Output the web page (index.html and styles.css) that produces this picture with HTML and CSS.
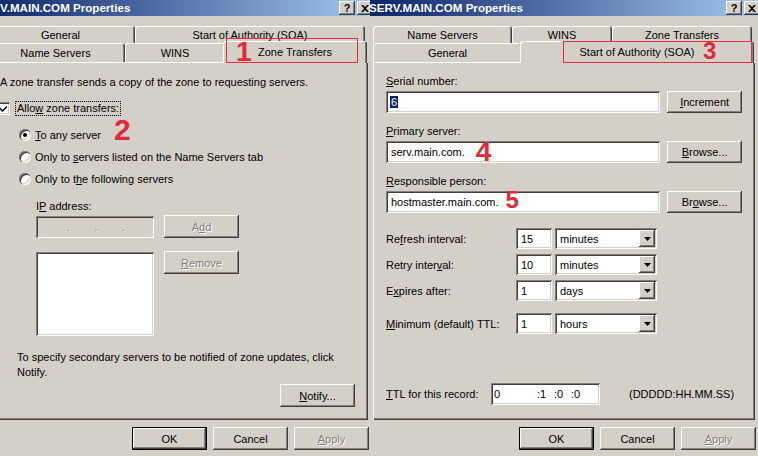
FILE: index.html
```html
<!DOCTYPE html>
<html lang="en">
<head>
    <meta charset="UTF-8">
    <meta name="viewport" content="width=device-width, initial-scale=1.0">
    <title>SERV.MAIN.COM Properties</title>
    <link rel="stylesheet" href="styles.css">
</head>
<body>
<div class="desktop">

    <!-- left dialog: Zone Transfers tab -->
    <div class="window window-left">
        <div class="titlebar">
            <span class="title">V.MAIN.COM Properties</span>
            <span class="caption-btns">
                <span class="cap-btn">?</span>
                <span class="cap-btn"><svg width="8" height="7" viewBox="0 0 8 7"><path d="M0 0h2l2 2 2-2h2L5 3.5 8 7H6L4 5 2 7H0l3-3.5z" fill="#000"/></svg></span>
            </span>
        </div>
        <div class="window-body">
            <div class="tabs">
                <div class="tab-row row-b">
                    <div class="tab">General</div>
                    <div class="tab">Start of Authority (SOA)</div>
                </div>
                <div class="tab-row row-a front">
                    <div class="tab">Name Servers</div>
                    <div class="tab">WINS</div>
                    <div class="tab selected">Zone Transfers
                        <div class="mark mark-1"><span class="num num-1">1</span></div>
                    </div>
                </div>
            </div>

            <div class="panel zt">
                <p class="intro">A zone transfer sends a copy of the zone to requesting servers.</p>
                <div class="check-row">
                    <span class="checkbox"><svg width="9" height="9" viewBox="0 0 9 9"><path d="M1 3.5l2.5 2.5L8 1.5v2L3.5 8 1 5.5z" fill="#000"/></svg></span>
                    <span class="focus">Allo<u>w</u> zone transfers:</span>
                </div>
                <div class="radio-list">
                    <div class="radio-row">
                        <span class="radio on"></span>
                        <span><u>T</u>o any server</span>
                        <span class="num num-2">2</span>
                    </div>
                    <div class="radio-row">
                        <span class="radio"></span>
                        <span>Only to <u>s</u>ervers listed on the Name Servers tab</span>
                    </div>
                    <div class="radio-row">
                        <span class="radio"></span>
                        <span>Only to t<u>h</u>e following servers</span>
                    </div>
                </div>
                <div class="ip-block">
                    <div class="label">I<u>P</u> address:</div>
                    <div class="ip-grid">
                        <div class="textbox ipbox"><span class="dot">.</span><span class="dot">.</span><span class="dot">.</span></div>
                        <div class="btn disabled">A<u>d</u>d</div>
                        <div class="textbox listbox"></div>
                        <div class="btn disabled"><u>R</u>emove</div>
                    </div>
                </div>
                <p class="note">To specify secondary servers to be notified of zone updates, click<br>Notify.</p>
                <div class="notify-row">
                    <div class="btn"><u>N</u>otify...</div>
                </div>
            </div>

            <div class="buttons">
                <div class="btn default">OK</div>
                <div class="btn">Cancel</div>
                <div class="btn disabled"><u>A</u>pply</div>
            </div>
        </div>
    </div>

    <!-- right dialog: SOA tab -->
    <div class="window window-right">
        <div class="titlebar">
            <span class="title">SERV.MAIN.COM Properties</span>
            <span class="caption-btns">
                <span class="cap-btn">?</span>
                <span class="cap-btn"><svg width="8" height="7" viewBox="0 0 8 7"><path d="M0 0h2l2 2 2-2h2L5 3.5 8 7H6L4 5 2 7H0l3-3.5z" fill="#000"/></svg></span>
            </span>
        </div>
        <div class="window-body">
            <div class="tabs">
                <div class="tab-row row-a">
                    <div class="tab">Name Servers</div>
                    <div class="tab">WINS</div>
                    <div class="tab">Zone Transfers</div>
                </div>
                <div class="tab-row row-b front">
                    <div class="tab">General</div>
                    <div class="tab selected">Start of Authority (SOA)
                        <div class="mark mark-3"><span class="num num-3">3</span></div>
                    </div>
                </div>
            </div>

            <div class="panel soa">
                <div class="field">
                    <div class="label"><u>S</u>erial number:</div>
                    <div class="field-row">
                        <div class="textbox wide"><span class="sel">6</span></div>
                        <div class="btn"><u>I</u>ncrement</div>
                    </div>
                </div>
                <div class="field">
                    <div class="label"><u>P</u>rimary server:</div>
                    <div class="field-row">
                        <div class="textbox wide">serv.main.com.<span class="num num-4">4</span></div>
                        <div class="btn"><u>B</u>rowse...</div>
                    </div>
                </div>
                <div class="field">
                    <div class="label"><u>R</u>esponsible person:</div>
                    <div class="field-row">
                        <div class="textbox wide">hostmaster.main.com.<span class="num num-5">5</span></div>
                        <div class="btn">Br<u>o</u>wse...</div>
                    </div>
                </div>

                <div class="intervals">
                    <div class="int-row">
                        <span class="int-label">Re<u>f</u>resh interval:</span>
                        <div class="textbox num-box">15</div>
                        <div class="combo">minutes<span class="combo-btn"><svg width="7" height="4" viewBox="0 0 7 4"><path d="M0 0h7L3.5 4z" fill="#000"/></svg></span></div>
                    </div>
                    <div class="int-row">
                        <span class="int-label">Retry inter<u>v</u>al:</span>
                        <div class="textbox num-box">10</div>
                        <div class="combo">minutes<span class="combo-btn"><svg width="7" height="4" viewBox="0 0 7 4"><path d="M0 0h7L3.5 4z" fill="#000"/></svg></span></div>
                    </div>
                    <div class="int-row">
                        <span class="int-label">E<u>x</u>pires after:</span>
                        <div class="textbox num-box">1</div>
                        <div class="combo">days<span class="combo-btn"><svg width="7" height="4" viewBox="0 0 7 4"><path d="M0 0h7L3.5 4z" fill="#000"/></svg></span></div>
                    </div>
                    <div class="int-row spaced">
                        <span class="int-label"><u>M</u>inimum (default) TTL:</span>
                        <div class="textbox num-box">1</div>
                        <div class="combo">hours<span class="combo-btn"><svg width="7" height="4" viewBox="0 0 7 4"><path d="M0 0h7L3.5 4z" fill="#000"/></svg></span></div>
                    </div>
                </div>

                <div class="ttl-row">
                    <span class="ttl-label"><u>T</u>TL for this record:</span>
                    <div class="textbox ttl-box">
                        <span class="seg seg-days">0</span><span class="seg">:1</span><span class="seg">:0</span><span class="seg">:0</span>
                    </div>
                    <span class="ttl-hint">(DDDDD:HH.MM.SS)</span>
                </div>
            </div>

            <div class="buttons">
                <div class="btn default">OK</div>
                <div class="btn">Cancel</div>
                <div class="btn disabled"><u>A</u>pply</div>
            </div>
        </div>
    </div>

</div>
</body>
</html>
```

FILE: styles.css
```css
* {
    box-sizing: border-box;
}

body {
    margin: 0;
    width: 758px;
    height: 456px;
    overflow: hidden;
    background: #d4d0c8;
    font-family: "Liberation Sans", Arial, sans-serif;
    font-size: 11px;
    color: #000;
}

p {
    margin: 0;
}

.desktop {
    display: flex;
    height: 456px;
}

/* windows */
.window {
    position: relative;
    flex: 0 0 394px;
    width: 394px;
    height: 456px;
    background: #d4d0c8;
}

.window-left {
    margin-left: -17px;
    z-index: 1;
}

.window-right {
    margin-left: -7px;
    z-index: 2;
}

.titlebar {
    display: flex;
    align-items: center;
    justify-content: space-between;
    height: 16px;
    padding: 0 4px 0 17px;
    background: linear-gradient(to right, #0a246a, #a6caf0);
}

.window-right .titlebar {
    padding-left: 0;
}

.window-right .title {
    margin-left: -1px;
}

.title {
    color: #fff;
    font-weight: bold;
    font-size: 11.6px;
    line-height: 16px;
    white-space: nowrap;
}

.caption-btns {
    display: flex;
    gap: 2px;
}

.cap-btn {
    display: flex;
    align-items: center;
    justify-content: center;
    width: 16px;
    height: 14px;
    background: #d4d0c8;
    font-weight: bold;
    font-size: 11px;
    box-shadow: inset -1px -1px #404040, inset 1px 1px #fff, inset -2px -2px #808080;
}

.window-body {
    padding: 0 8px 0 3px;
}

/* tabs */
.tabs {
    margin: 10px 4px 0 0;
}

.tab-row {
    display: grid;
    height: 17px;
}

.tab-row.front {
    height: 19px;
}

.row-a {
    grid-template-columns: 139px 100px 1fr;
}

.row-b {
    grid-template-columns: 149px 1fr;
}

.tab {
    position: relative;
    display: flex;
    align-items: center;
    justify-content: center;
    background: #d4d0c8;
    border-radius: 3px 3px 0 0;
    box-shadow: inset 1px 1px #fff, inset -1px 0 #404040, inset -2px 0 #808080;
    white-space: nowrap;
}

.tab-row.front .tab {
    padding-top: 1px;
}

.tab.selected {
    margin: -2px -2px -1px;
    padding: 0 0 2px;
    z-index: 2;
}

/* red annotations */
.mark {
    position: absolute;
    top: -3px;
    bottom: 0;
    display: flex;
    align-items: center;
    border: 1px solid #e0303a;
}

.mark-1 {
    left: 3px;
    right: 9px;
    padding-left: 9px;
}

.mark-3 {
    top: 0;
    left: 43px;
    right: 2px;
    padding-left: 139px;
}

.num {
    position: relative;
    color: #e02a36;
    font-weight: bold;
    font-size: 28px;
    line-height: 20px;
}

.num-1 {
    top: 1px;
}

.num-2 {
    top: -5px;
    margin-left: 13px;
    font-size: 30px;
}

.num-3 {
    top: -2px;
    font-size: 24px;
    line-height: 17px;
}

.num-4 {
    margin-left: 11px;
}

.num-5 {
    top: -3px;
    margin-left: 7px;
    font-size: 24px;
    line-height: 17px;
}

/* panel */
.panel {
    height: 358px;
    margin-right: 1px;
    box-shadow: inset 1px 1px #fff, inset -1px -1px #404040, inset -2px -2px #808080;
}

.zt {
    padding: 14px 13px 0 14px;
}

.intro {
    line-height: 13px;
    white-space: nowrap;
}

.check-row {
    display: flex;
    align-items: center;
    height: 13px;
    margin-top: 13px;
    margin-left: -3px;
}

.checkbox {
    display: flex;
    align-items: center;
    justify-content: center;
    width: 13px;
    height: 13px;
    background: #fff;
    box-shadow: inset 1px 1px #808080, inset -1px -1px #fff, inset 2px 2px #404040, inset -2px -2px #d4d0c8;
}

.focus {
    margin-left: 6px;
    padding: 0 1px;
    line-height: 13px;
    outline: 1px dotted #000;
}

.radio-list {
    display: flex;
    flex-direction: column;
    gap: 9px;
    margin-top: 13px;
    padding-left: 19px;
}

.radio-row {
    display: flex;
    align-items: center;
    height: 13px;
    white-space: nowrap;
}

.radio {
    position: relative;
    width: 12px;
    height: 12px;
    margin-right: 4px;
    border-radius: 50%;
    background: #fff;
    box-shadow: inset 1px 1px #808080, inset 2px 2px #404040, inset -1px -1px #fff, inset -2px -2px #d4d0c8;
}

.radio.on::after {
    content: "";
    position: absolute;
    left: 4px;
    top: 4px;
    width: 4px;
    height: 4px;
    border-radius: 50%;
    background: #000;
}

.ip-block {
    margin-top: 15px;
    padding-left: 36px;
}

.label {
    line-height: 13px;
}

.ip-grid {
    display: grid;
    grid-template-columns: 118px 75px;
    grid-template-rows: 22px 84px;
    column-gap: 10px;
    row-gap: 14px;
    margin-top: 3px;
}

.ip-grid .btn {
    align-self: start;
    margin-top: -1px;
}

.textbox {
    display: flex;
    align-items: center;
    background: #fff;
    padding: 0 5px;
    white-space: nowrap;
    box-shadow: inset 1px 1px #808080, inset -1px -1px #fff, inset 2px 2px #404040, inset -2px -2px #d4d0c8;
}

.ipbox {
    background: #d4d0c8;
    padding-left: 31px;
}

.dot {
    width: 28px;
    color: #808080;
    text-shadow: 1px 1px 0 #fff;
}

.note {
    margin: 14px 0 0 17px;
    line-height: 15px;
    white-space: nowrap;
}

.notify-row {
    display: flex;
    justify-content: flex-end;
    margin-top: 4px;
}

/* buttons */
.btn {
    display: flex;
    align-items: center;
    justify-content: center;
    width: 75px;
    height: 23px;
    background: #d4d0c8;
    white-space: nowrap;
    box-shadow: inset -1px -1px #404040, inset 1px 1px #fff, inset -2px -2px #808080;
}

.btn.default {
    border: 1px solid #000;
}

.btn.disabled {
    color: #808080;
    text-shadow: 1px 1px 0 #fff;
}

.buttons {
    display: flex;
    justify-content: flex-end;
    gap: 6px;
    margin-top: 7px;
}

/* SOA page */
.soa {
    padding: 13px 13px 0 13px;
}

.field + .field {
    margin-top: 12px;
}

.field .label {
    margin-bottom: 3px;
}

.field-row {
    display: flex;
    gap: 7px;
    height: 22px;
}

.field-row .btn {
    height: 22px;
}

.wide {
    width: 275px;
}

.sel {
    background: #0a246a;
    color: #fff;
    padding: 0 1px;
    margin-left: -1px;
}

.intervals {
    margin-top: 15px;
}

.int-row {
    display: flex;
    align-items: center;
    height: 21px;
    margin-top: 5px;
}

.int-row:first-child {
    margin-top: 0;
}

.int-row.spaced {
    margin-top: 12px;
}

.int-label {
    width: 130px;
}

.num-box {
    width: 36px;
    height: 21px;
}

.combo {
    display: flex;
    align-items: center;
    justify-content: space-between;
    width: 102px;
    height: 21px;
    margin-left: 3px;
    padding: 0 2px 0 5px;
    background: #fff;
    box-shadow: inset 1px 1px #808080, inset -1px -1px #fff, inset 2px 2px #404040, inset -2px -2px #d4d0c8;
}

.combo-btn {
    display: flex;
    align-items: center;
    justify-content: center;
    width: 16px;
    height: 17px;
    background: #d4d0c8;
    box-shadow: inset -1px -1px #404040, inset 1px 1px #fff, inset -2px -2px #808080;
}

.ttl-row {
    display: flex;
    align-items: center;
    height: 22px;
    margin-top: 49px;
}

.ttl-label {
    width: 105px;
}

.ttl-box {
    width: 109px;
    height: 22px;
    padding-left: 3px;
}

.seg {
    width: 17px;
}

.seg-days {
    width: 43px;
}

.ttl-hint {
    margin-left: 29px;
}
```
